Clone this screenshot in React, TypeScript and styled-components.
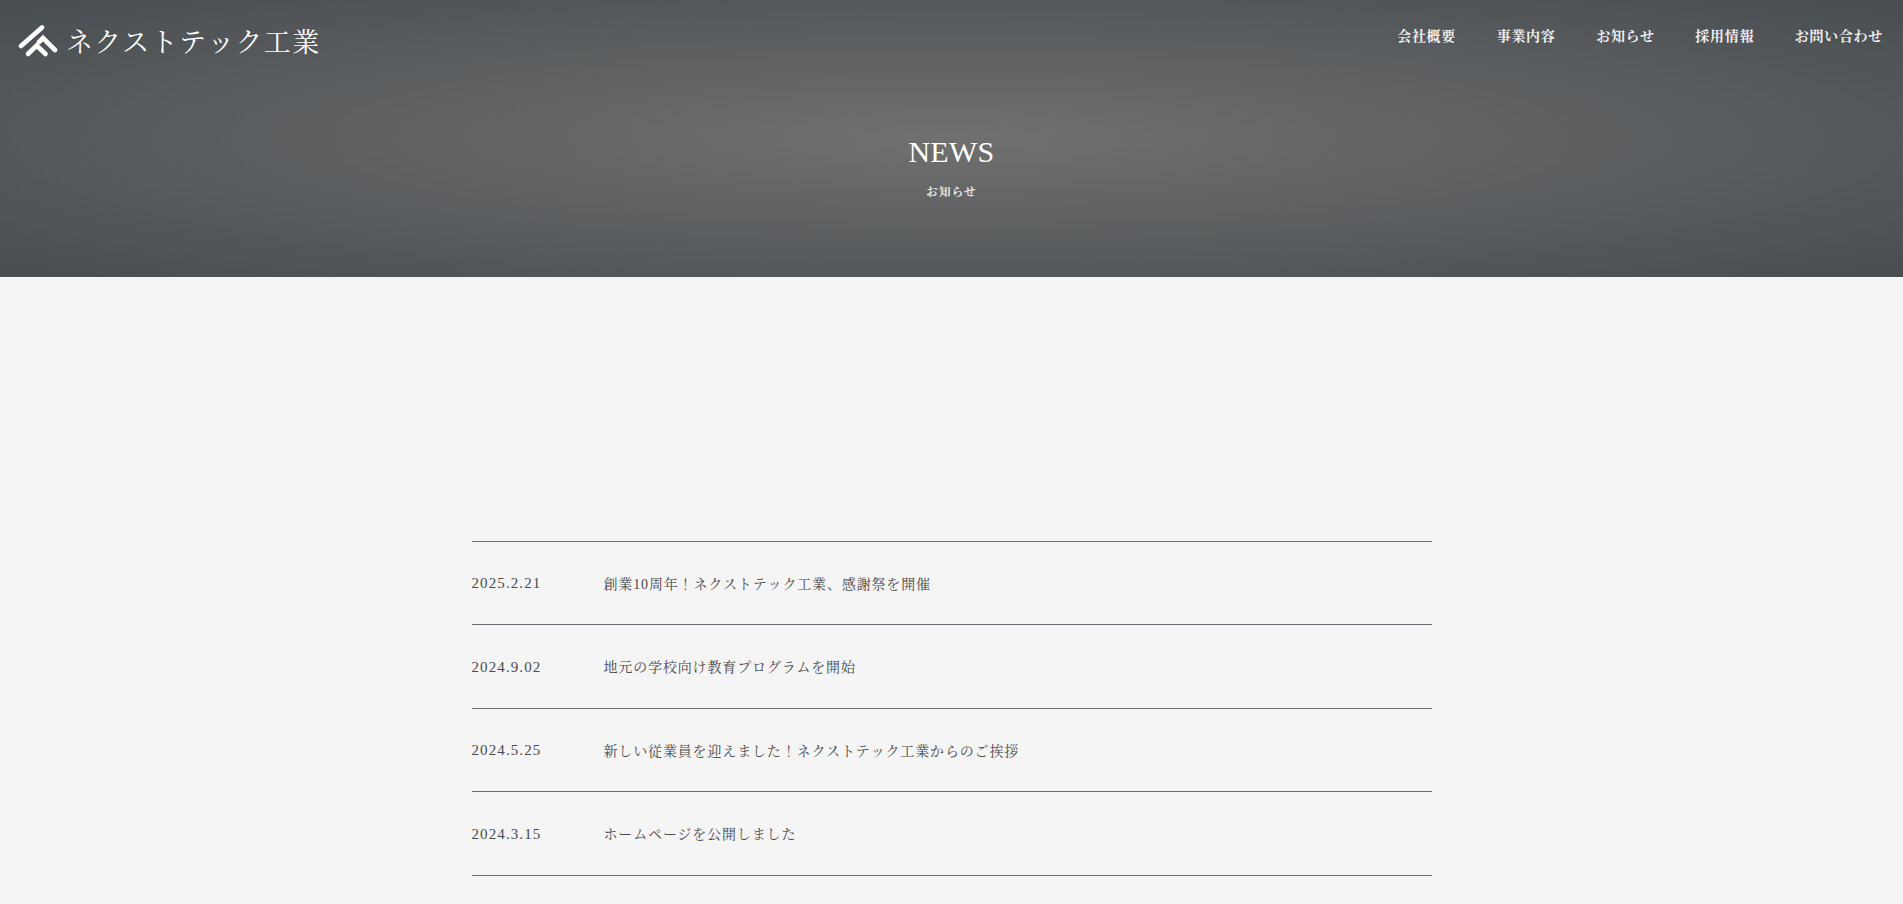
import React from 'react';
import styled, { createGlobalStyle } from 'styled-components';

const serif = `"Liberation Serif", "Noto Serif CJK JP", serif`;

const GlobalStyle = createGlobalStyle`
  html, body {
    margin: 0;
    padding: 0;
    background: #f5f5f5;
    font-family: ${serif};
  }
`;

const Hero = styled.section`
  height: 277px;
  background: radial-gradient(ellipse at center, #70706f 0%, #4a4f53 95%);
  color: #fff;
  display: flex;
  flex-direction: column;
`;

const Header = styled.header`
  display: flex;
  align-items: flex-start;
  justify-content: space-between;
  padding: 25px 20px 0 18px;
`;

const Logo = styled.a`
  display: flex;
  align-items: center;
  gap: 8px;
  font-size: 27px;
  line-height: 34px;
  letter-spacing: 1.3px;
  color: #fff;
`;

const Nav = styled.nav`
  display: flex;
  gap: 40.7px;
  padding-top: 2px;
`;

const NavLink = styled.a`
  font-size: 14px;
  line-height: 20px;
  font-weight: 700;
  letter-spacing: 0.7px;
  color: #f0f0f0;
`;

const HeroTitle = styled.div`
  display: flex;
  flex-direction: column;
  align-items: center;
  padding-top: 73px;
`;

const TitleEn = styled.h1`
  margin: 0;
  font-size: 30px;
  line-height: 36px;
  font-weight: 400;
  letter-spacing: 0.3px;
`;

const TitleJa = styled.p`
  margin: 14px 0 0;
  font-size: 11.5px;
  line-height: 16px;
  font-weight: 700;
  letter-spacing: 1.2px;
  color: #eee;
`;

const Main = styled.main`
  width: 960px;
  margin: 263.9px auto 0;
  border-top: 1px solid #666d75;
`;

const Row = styled.article`
  height: 82.5px;
  display: flex;
  align-items: center;
  border-bottom: 1px solid #666d75;
  color: #4a4a4a;
  font-size: 14px;
  letter-spacing: 0.85px;
`;

const DateText = styled.time`
  width: 132px;
  padding-top: 1px;
  font-size: 15px;
  letter-spacing: 1.1px;
`;

const RowTitle = styled.span`
  margin-top: -1px;
`;

const news = [
  { date: '2025.2.21', title: '創業10周年！ネクストテック工業、感謝祭を開催' },
  { date: '2024.9.02', title: '地元の学校向け教育プログラムを開始' },
  { date: '2024.5.25', title: '新しい従業員を迎えました！ネクストテック工業からのご挨拶' },
  { date: '2024.3.15', title: 'ホームページを公開しました' },
];

const links = ['会社概要', '事業内容', 'お知らせ', '採用情報', 'お問い合わせ'];

const LogoMark = () => (
  <svg width="40" height="36" viewBox="0 0 40 36" aria-hidden="true">
    <g fill="none" stroke="#fff" strokeWidth="4.6" strokeLinecap="round" strokeLinejoin="miter">
      <path d="M3 21 L24 2.5" />
      <path d="M21 17 L25 13 L37 25" />
      <path d="M10 29 L18.7 20.5 L27.5 29" />
    </g>
  </svg>
);

const App: React.FC = () => (
  <>
    <GlobalStyle />
    <Hero>
      <Header>
        <Logo>
          <LogoMark />
          ネクストテック工業
        </Logo>
        <Nav>
          {links.map((l) => (
            <NavLink key={l}>{l}</NavLink>
          ))}
        </Nav>
      </Header>
      <HeroTitle>
        <TitleEn>NEWS</TitleEn>
        <TitleJa>お知らせ</TitleJa>
      </HeroTitle>
    </Hero>
    <Main>
      {news.map((n) => (
        <Row key={n.date}>
          <DateText>{n.date}</DateText>
          <RowTitle>{n.title}</RowTitle>
        </Row>
      ))}
    </Main>
  </>
);

export default App;
